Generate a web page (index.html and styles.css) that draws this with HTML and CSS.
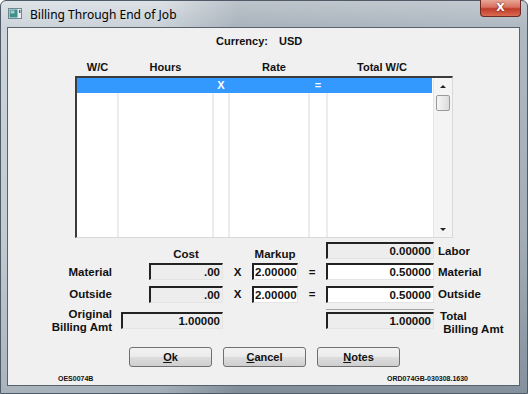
FILE: index.html
```html
<!DOCTYPE html>
<html lang="en">
  <head>
    <meta charset="UTF-8" />
    <title>Billing Through End of Job</title>
    <link rel="stylesheet" href="styles.css">
  </head>
  <body>
    <div class="window">
      <div class="titlebar">
        <span class="app-icon">
          <svg width="14" height="11" viewBox="0 0 14 11">
            <rect x="0.5" y="0.5" width="13" height="10" fill="#e8eef0" stroke="#6f8790"/>
            <rect x="1.5" y="1.5" width="8" height="8" fill="#3f8f8c"/>
            <rect x="2.5" y="2.5" width="4" height="3" fill="#9fd0cc"/>
            <rect x="11" y="2" width="1.5" height="3" fill="#4a6a74"/>
          </svg>
        </span>
        <span class="title">Billing Through End of Job</span>
        <span class="close-btn">X</span>
      </div>

      <div class="client">
        <div class="currency">
          <span>Currency:</span>
          <span>USD</span>
        </div>

        <div class="col-heads">
          <span>W/C</span>
          <span>Hours</span>
          <span></span>
          <span class="head-rate">Rate</span>
          <span></span>
          <span class="head-total">Total W/C</span>
        </div>

        <div class="listbox">
          <div class="list-grid">
            <div class="cell sel"></div>
            <div class="cell sel"></div>
            <div class="cell sel">X</div>
            <div class="cell sel"></div>
            <div class="cell sel">=</div>
            <div class="cell sel last"></div>
            <div class="cell"></div>
            <div class="cell"></div>
            <div class="cell"></div>
            <div class="cell"></div>
            <div class="cell"></div>
            <div class="cell last"></div>
          </div>
          <div class="scrollbar">
            <div class="sb-btn"><span class="arrow-up"></span></div>
            <div class="sb-thumb"></div>
            <div class="sb-track"></div>
            <div class="sb-btn"><span class="arrow-down"></span></div>
          </div>
        </div>

        <div class="totals">
          <!-- row 1 -->
          <span></span>
          <span class="col-head cost-head">Cost</span>
          <span></span>
          <span class="col-head">Markup</span>
          <span></span>
          <div class="field ro">0.00000</div>
          <span class="side-label">Labor</span>

          <!-- row 2 -->
          <span class="row-label">Material</span>
          <div class="field ro cost">.00</div>
          <span class="op">X</span>
          <div class="field markup">2.00000</div>
          <span class="op">=</span>
          <div class="field">0.50000</div>
          <span class="side-label">Material</span>

          <!-- row 3 -->
          <span class="row-label">Outside</span>
          <div class="field ro cost">.00</div>
          <span class="op">X</span>
          <div class="field markup">2.00000</div>
          <span class="op">=</span>
          <div class="field">0.50000</div>
          <span class="side-label">Outside</span>

          <!-- row 4 -->
          <span class="row-label two-line">Original<br>Billing Amt</span>
          <div class="field ro orig">1.00000</div>
          <span></span>
          <span></span>
          <span></span>
          <div class="total-box">
            <div class="field ro">1.00000</div>
          </div>
          <span class="side-label two-line">Total<br>&nbsp;Billing Amt</span>
        </div>

        <div class="buttons">
          <button><u>O</u>k</button>
          <button><u>C</u>ancel</button>
          <button><u>N</u>otes</button>
        </div>

        <div class="footer">
          <span>OES0074B</span>
          <span>ORD074GB-030308.1630</span>
        </div>
      </div>
    </div>
  </body>
</html>
```

FILE: styles.css
```css
body {
  margin: 0;
  background: #ffffff;
  font-family: "Liberation Sans", Arial, sans-serif;
}

.window {
  width: 528px;
  height: 394px;
  box-sizing: border-box;
  background:
    linear-gradient(to right, rgba(255, 255, 255, 0.25) 0, rgba(255, 255, 255, 0.2) 30%, rgba(60, 70, 80, 0.15) 45%, rgba(60, 70, 80, 0.1) 100%),
    linear-gradient(to bottom, #d3dae0 0, #bcc6cf 26px, #aeb9c3 60%, #8d9aa6 100%);
  border: 1px solid #4f5b66;
  border-radius: 6px 6px 0 0;
  display: flex;
  flex-direction: column;
}

.titlebar {
  height: 26px;
  display: flex;
  align-items: flex-start;
}

.app-icon {
  margin: 7px 0 0 7px;
  height: 11px;
  display: flex;
}

.title {
  margin: 5px 0 0 8px;
  font-family: "Noto Sans", sans-serif;
  font-size: 12px;
  color: #000;
}

.close-btn {
  margin: -1px 6px 0 auto;
  width: 41px;
  height: 17px;
  box-sizing: border-box;
  border: 1px solid #6e2a22;
  border-top: none;
  border-radius: 0 0 4px 4px;
  background: linear-gradient(to bottom, #e9a796 0, #d7705f 45%, #c03b2a 55%, #d96b52 100%);
  color: #fff;
  font-family: "DejaVu Sans", sans-serif;
  font-weight: bold;
  font-size: 11px;
  line-height: 16px;
  text-align: center;
  text-shadow: 0 0 2px #5a1a12;
}

.client {
  margin: 0 7px 0 6px;
  height: 359px;
  box-sizing: border-box;
  border: 1px solid #56626d;
  background: #f0f0f0;
  font-size: 11px;
  font-weight: bold;
  color: #111;
}

.currency {
  display: flex;
  gap: 11px;
  padding-left: 208px;
  margin-top: 6px;
  line-height: 14px;
}

.col-heads {
  display: grid;
  grid-template-columns: 41px 95px 16px 80px 18px 105px;
  margin: 12px 0 0 69px;
  line-height: 14px;
  text-align: center;
}

.head-rate {
  padding-left: 10px;
}

.head-total {
  padding-left: 5px;
}

.listbox {
  margin: 2px 0 0 67px;
  width: 378px;
  height: 162px;
  box-sizing: border-box;
  border-top: 2px solid #3c3c3c;
  border-left: 2px solid #3c3c3c;
  border-right: 1px solid #d8d8d8;
  border-bottom: 1px solid #d8d8d8;
  background: #fff;
  display: flex;
}

.list-grid {
  display: grid;
  grid-template-columns: 42px 95px 16px 80px 18px 104px;
  grid-template-rows: 15px 1fr;
}

.cell {
  border-right: 2px solid #ececec;
  color: #fff;
  text-align: center;
  line-height: 15px;
}

.cell.last {
  border-right: none;
}

.cell.sel {
  background: #3399ff;
  border-right-color: #3399ff;
}

.scrollbar {
  width: 20px;
  display: flex;
  flex-direction: column;
  align-items: center;
  background: #f4f4f4;
  border-left: 1px solid #e6e6e6;
  margin-left: 1px;
}

.sb-btn {
  height: 16px;
  width: 100%;
  display: flex;
  align-items: center;
  justify-content: center;
}

.arrow-up {
  border-left: 3px solid transparent;
  border-right: 3px solid transparent;
  border-bottom: 3px solid #222;
}

.arrow-down {
  border-left: 3px solid transparent;
  border-right: 3px solid transparent;
  border-top: 3px solid #222;
}

.sb-thumb {
  margin-top: 1px;
  width: 14px;
  height: 16px;
  box-sizing: border-box;
  border: 1px solid #9a9a9a;
  border-radius: 2px;
  background: linear-gradient(to right, #f6f6f6, #dcdcdc);
}

.sb-track {
  flex: 1;
}

.totals {
  display: grid;
  grid-template-columns: 108px 107px 29px 46px 28px 108px 1fr;
  grid-template-rows: 18px 18px 20px 27px;
  row-gap: 3px;
  margin-top: 3px;
}

.col-head {
  align-self: end;
  text-align: center;
  line-height: 13px;
  font-size: 11.5px;
  margin-bottom: -2px;
}

.cost-head {
  justify-self: end;
  width: 74px;
}

.row-label {
  align-self: center;
  text-align: right;
  padding-right: 4px;
  font-size: 11.5px;
  line-height: 13px;
  margin-top: 3px;
}

.row-label.two-line {
  margin-top: 3px;
}

.side-label {
  align-self: center;
  padding-left: 4px;
  font-size: 11.5px;
  line-height: 13px;
  margin-top: 3px;
}

.side-label.two-line {
  padding-left: 6px;
  margin-top: 6px;
}

.op {
  align-self: center;
  text-align: center;
  font-size: 11.5px;
  margin-top: 2px;
}

.field {
  align-self: end;
  height: 17px;
  box-sizing: border-box;
  border-top: 2px solid #222;
  border-left: 2px solid #222;
  border-right: 1px solid #e4e4e4;
  border-bottom: 1px solid #e4e4e4;
  background: #fff;
  text-align: right;
  padding-right: 2px;
  line-height: 15px;
  font-size: 11.5px;
}

.field.ro {
  background: #ededed;
}

.field.cost {
  justify-self: end;
  width: 74px;
}

.field.markup {
  text-align: left;
  padding-left: 1px;
  padding-right: 0;
}

.field.orig {
  align-self: start;
  justify-self: end;
  width: 102px;
  margin-top: 6px;
}

.total-box {
  margin-top: 3px;
  border-top: 1px solid #a6a6a6;
  padding-top: 2px;
}

.buttons {
  display: flex;
  gap: 11px;
  margin: 14px 0 0 121px;
}

button {
  width: 83px;
  height: 20px;
  padding: 0;
  border: 1px solid #707070;
  border-radius: 3px;
  background: linear-gradient(to bottom, #f2f2f2 0, #ebebeb 50%, #dddddd 51%, #cfcfcf 100%);
  font-family: "Liberation Sans", Arial, sans-serif;
  font-size: 11px;
  font-weight: bold;
  color: #111;
}

.footer {
  display: flex;
  justify-content: space-between;
  padding: 0 51px 0 50px;
  margin-top: 7px;
  font-size: 7px;
  line-height: 9px;
}
```
